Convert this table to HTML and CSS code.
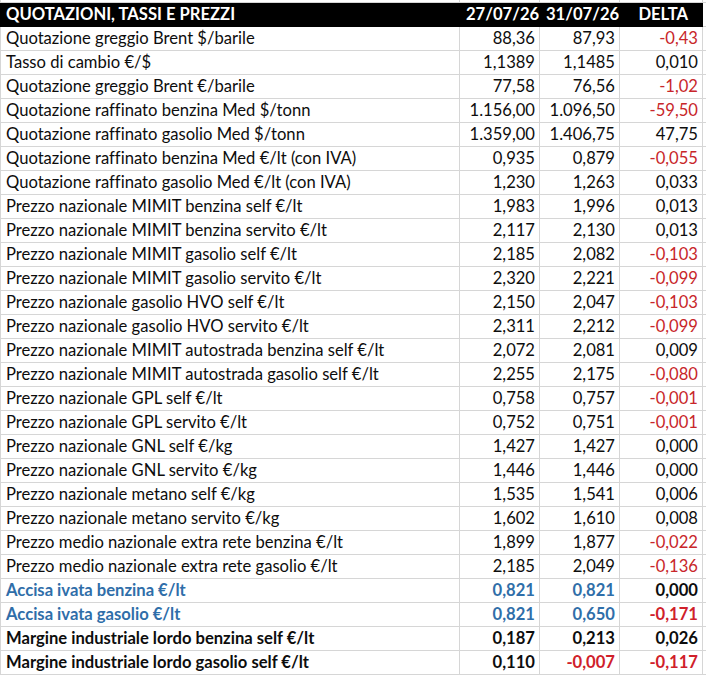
FILE: index.html
```html
<!DOCTYPE html>
<html lang="it">
<head>
<meta charset="utf-8">
<title>Quotazioni, tassi e prezzi</title>
<link rel="stylesheet" href="styles.css">
</head>
<body>
<table class="sheet">
<colgroup><col class="c-label"><col class="c-num"><col class="c-num"><col class="c-delta"><col class="c-extra"></colgroup>
<tr class="top"><td></td><td></td><td></td><td></td><td class="x"></td></tr>
<tr class="head"><th class="l">QUOTAZIONI, TASSI E PREZZI</th><th>27/07/26</th><th>31/07/26</th><th>DELTA</th><td class="x"></td></tr>
<tr><td class="l">Quotazione greggio Brent $/barile</td><td>88,36</td><td>87,93</td><td class="neg">-0,43</td><td class="x"></td></tr>
<tr><td class="l">Tasso di cambio €/$</td><td>1,1389</td><td>1,1485</td><td>0,010</td><td class="x"></td></tr>
<tr><td class="l">Quotazione greggio Brent €/barile</td><td>77,58</td><td>76,56</td><td class="neg">-1,02</td><td class="x"></td></tr>
<tr><td class="l">Quotazione raffinato benzina Med $/tonn</td><td>1.156,00</td><td>1.096,50</td><td class="neg">-59,50</td><td class="x"></td></tr>
<tr><td class="l">Quotazione raffinato gasolio Med $/tonn</td><td>1.359,00</td><td>1.406,75</td><td>47,75</td><td class="x"></td></tr>
<tr><td class="l">Quotazione raffinato benzina Med €/lt (con IVA)</td><td>0,935</td><td>0,879</td><td class="neg">-0,055</td><td class="x"></td></tr>
<tr><td class="l">Quotazione raffinato gasolio Med €/lt (con IVA)</td><td>1,230</td><td>1,263</td><td>0,033</td><td class="x"></td></tr>
<tr><td class="l">Prezzo nazionale MIMIT benzina self €/lt</td><td>1,983</td><td>1,996</td><td>0,013</td><td class="x"></td></tr>
<tr><td class="l">Prezzo nazionale MIMIT benzina servito €/lt</td><td>2,117</td><td>2,130</td><td>0,013</td><td class="x"></td></tr>
<tr><td class="l">Prezzo nazionale MIMIT gasolio self €/lt</td><td>2,185</td><td>2,082</td><td class="neg">-0,103</td><td class="x"></td></tr>
<tr><td class="l">Prezzo nazionale MIMIT gasolio servito €/lt</td><td>2,320</td><td>2,221</td><td class="neg">-0,099</td><td class="x"></td></tr>
<tr><td class="l">Prezzo nazionale gasolio HVO self €/lt</td><td>2,150</td><td>2,047</td><td class="neg">-0,103</td><td class="x"></td></tr>
<tr><td class="l">Prezzo nazionale gasolio HVO servito €/lt</td><td>2,311</td><td>2,212</td><td class="neg">-0,099</td><td class="x"></td></tr>
<tr><td class="l">Prezzo nazionale MIMIT autostrada benzina self €/lt</td><td>2,072</td><td>2,081</td><td>0,009</td><td class="x"></td></tr>
<tr><td class="l">Prezzo nazionale MIMIT autostrada gasolio self €/lt</td><td>2,255</td><td>2,175</td><td class="neg">-0,080</td><td class="x"></td></tr>
<tr><td class="l">Prezzo nazionale GPL self €/lt</td><td>0,758</td><td>0,757</td><td class="neg">-0,001</td><td class="x"></td></tr>
<tr><td class="l">Prezzo nazionale GPL servito €/lt</td><td>0,752</td><td>0,751</td><td class="neg">-0,001</td><td class="x"></td></tr>
<tr><td class="l">Prezzo nazionale GNL self €/kg</td><td>1,427</td><td>1,427</td><td>0,000</td><td class="x"></td></tr>
<tr><td class="l">Prezzo nazionale GNL servito €/kg</td><td>1,446</td><td>1,446</td><td>0,000</td><td class="x"></td></tr>
<tr><td class="l">Prezzo nazionale metano self €/kg</td><td>1,535</td><td>1,541</td><td>0,006</td><td class="x"></td></tr>
<tr><td class="l">Prezzo nazionale metano servito €/kg</td><td>1,602</td><td>1,610</td><td>0,008</td><td class="x"></td></tr>
<tr><td class="l">Prezzo medio nazionale extra rete benzina €/lt</td><td>1,899</td><td>1,877</td><td class="neg">-0,022</td><td class="x"></td></tr>
<tr><td class="l">Prezzo medio nazionale extra rete gasolio €/lt</td><td>2,185</td><td>2,049</td><td class="neg">-0,136</td><td class="x"></td></tr>
<tr class="accisa"><td class="l">Accisa ivata benzina €/lt</td><td>0,821</td><td>0,821</td><td class="plain">0,000</td><td class="x"></td></tr>
<tr class="accisa"><td class="l">Accisa ivata gasolio €/lt</td><td>0,821</td><td>0,650</td><td class="neg">-0,171</td><td class="x"></td></tr>
<tr class="bold"><td class="l">Margine industriale lordo benzina self €/lt</td><td>0,187</td><td>0,213</td><td>0,026</td><td class="x"></td></tr>
<tr class="bold"><td class="l">Margine industriale lordo gasolio self €/lt</td><td>0,110</td><td class="neg">-0,007</td><td class="neg">-0,117</td><td class="x"></td></tr>
</table>
</body>
</html>
```

FILE: styles.css
```css
html, body {
  margin: 0;
  padding: 0;
  background: #ffffff;
}

.sheet {
  border-collapse: collapse;
  table-layout: fixed;
  width: 706px;
  font-family: Lato, "Open Sans", sans-serif;
  font-size: 16.6px;
  font-variant-ligatures: none;
  color: #0d0d0d;
}

.c-label { width: 459px; }
.c-num { width: 80px; }
.c-delta { width: 83px; }
.c-extra { width: 4px; }

.sheet td, .sheet th {
  height: 23px;
  padding: 0 4px 0 6px;
  border: 1px solid #d6d6d6;
  text-align: right;
  white-space: nowrap;
  overflow: hidden;
  vertical-align: middle;
  line-height: 23px;
}

.sheet td.l, .sheet th.l {
  text-align: left;
  padding-left: 5px;
}

.sheet td.x {
  padding: 0;
  border-right: none;
}

.sheet tr.top td {
  height: 2px;
  line-height: 2px;
  border-top: none;
  padding: 0;
}

.sheet tr.head th {
  background: #000000;
  color: #ffffff;
  font-weight: 700;
  border-color: #000000;
}

.sheet tr.head th:nth-child(4) {
  padding-right: 14px;
}

.neg { color: #c8262a; }

.sheet tr.accisa td { font-weight: 700; color: #2f6ea9; }
.sheet tr.accisa td.neg { color: #d0202a; }
.sheet tr.accisa td.plain { color: #0d0d0d; }
.sheet tr.bold td { font-weight: 700; color: #0d0d0d; }
.sheet tr.bold td.neg { color: #d0202a; }
```
